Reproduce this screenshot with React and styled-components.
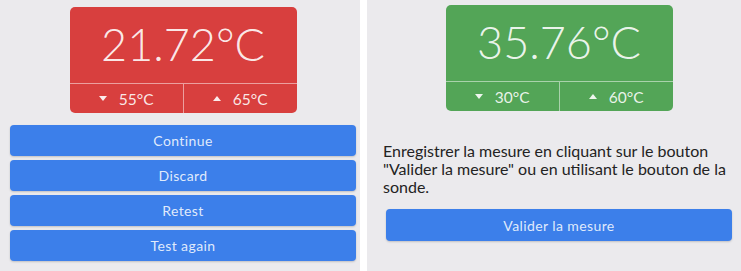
import React from 'react';
import styled, { createGlobalStyle } from 'styled-components';

const GlobalStyle = createGlobalStyle`
  body {
    margin: 0;
    background: #ffffff;
    font-family: Lato, "Noto Sans", sans-serif;
  }
`;

const Screen = styled.div`
  display: flex;
  gap: 7px;
  width: 741px;
  height: 271px;
  overflow: hidden;
`;

const Panel = styled.div`
  width: ${p => p.width}px;
  flex: ${p => (p.width ? 'none' : '1')};
  background: #ebeaed;
  padding: ${p => p.pad};
  box-sizing: border-box;
  display: flex;
  flex-direction: column;
  align-items: center;
`;

const Card = styled.div`
  width: 227px;
  height: 106px;
  border-radius: 5px;
  background: ${p => p.color};
  display: flex;
  flex-direction: column;
  overflow: hidden;
  flex: none;
`;

const Reading = styled.div`
  height: 77px;
  display: flex;
  align-items: center;
  justify-content: center;
  font-size: 45px;
  font-weight: 300;
  color: rgba(255, 255, 255, 0.9);
  border-bottom: 1px solid rgba(255, 255, 255, 0.5);
  box-sizing: border-box;
  padding-bottom: 2px;
`;

const Limits = styled.div`
  flex: 1;
  display: grid;
  grid-template-columns: 1fr 1fr;
`;

const Limit = styled.div`
  display: flex;
  align-items: center;
  justify-content: center;
  gap: 12px;
  font-size: 15.5px;
  color: rgba(255, 255, 255, 0.88);
  & + & {
    border-left: 1px solid rgba(255, 255, 255, 0.5);
  }
`;

const Arrow = styled.span`
  width: 0;
  height: 0;
  border-left: 4px solid transparent;
  border-right: 4px solid transparent;
  ${p => (p.up
    ? 'border-bottom: 5px solid rgba(255,255,255,0.9);'
    : 'border-top: 5px solid rgba(255,255,255,0.9);')}
`;

const Buttons = styled.div`
  align-self: stretch;
  display: flex;
  flex-direction: column;
  gap: 4px;
  margin-top: ${p => p.top}px;
`;

const Button = styled.button`
  height: ${p => p.h || 31}px;
  border: none;
  border-radius: 4px;
  background: #3c7fea;
  color: rgba(255, 255, 255, 0.85);
  font-family: Lato, "Noto Sans", sans-serif;
  font-size: 14px;
  letter-spacing: 0.4px;
  box-shadow: 0 1px 2px rgba(0, 0, 0, 0.18);
  padding: 0;
`;

const Message = styled.p`
  align-self: stretch;
  margin: 31px 0 0;
  font-size: 16px;
  line-height: 18px;
  color: #232323;
`;

const RightButton = styled(Button)`
  align-self: stretch;
  margin: 13px 3px 0;
`;

function Gauge({ color, value, low, high }) {
  return (
    <Card color={color}>
      <Reading>{value}</Reading>
      <Limits>
        <Limit><Arrow />{low}</Limit>
        <Limit><Arrow up />{high}</Limit>
      </Limits>
    </Card>
  );
}

export default function App() {
  return (
    <>
      <GlobalStyle />
      <Screen>
        <Panel width={360} pad="7px 4px 0 10px">
          <Gauge color="#d83f3e" value="21.72°C" low="55°C" high="65°C" />
          <Buttons top={12}>
            <Button>Continue</Button>
            <Button>Discard</Button>
            <Button>Retest</Button>
            <Button>Test again</Button>
          </Buttons>
        </Panel>
        <Panel pad="5px 6px 0 16px">
          <Gauge color="#53a557" value="35.76°C" low="30°C" high="60°C" />
          <Message>
            Enregistrer la mesure en cliquant sur le bouton "Valider la mesure" ou en utilisant le bouton de la sonde.
          </Message>
          <RightButton h={32}>Valider la mesure</RightButton>
        </Panel>
      </Screen>
    </>
  );
}
